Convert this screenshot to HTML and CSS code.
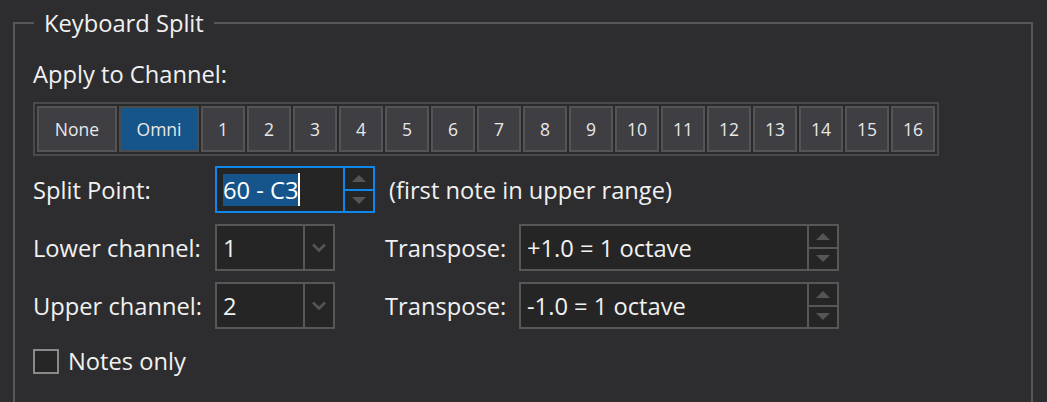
FILE: index.html
```html
<!DOCTYPE html>
<html>
<head>
<meta charset="utf-8">
<title>Keyboard Split</title>
<link rel="stylesheet" href="styles.css">
</head>
<body>
<fieldset class="group">
  <legend class="group-title">Keyboard Split</legend>

  <div class="line">Apply to Channel:</div>

  <div class="channel-strip">
    <button class="ch ch-wide">None</button>
    <button class="ch ch-wide ch-active">Omni</button>
    <button class="ch">1</button>
    <button class="ch">2</button>
    <button class="ch">3</button>
    <button class="ch">4</button>
    <button class="ch">5</button>
    <button class="ch">6</button>
    <button class="ch">7</button>
    <button class="ch">8</button>
    <button class="ch">9</button>
    <button class="ch">10</button>
    <button class="ch">11</button>
    <button class="ch">12</button>
    <button class="ch">13</button>
    <button class="ch">14</button>
    <button class="ch">15</button>
    <button class="ch">16</button>
  </div>

  <div class="row row-first">
    <span class="label label-main">Split Point:</span>
    <div class="spin spin-split spin-focus">
      <div class="field-text"><span class="sel">60 - C3</span><span class="caret"></span></div>
      <div class="spin-btns">
        <span class="spin-btn"><svg class="arrow" viewBox="0 0 14 7" width="14" height="7"><polygon points="0,7 7,0 14,7"/></svg></span>
        <span class="spin-btn"><svg class="arrow" viewBox="0 0 14 7" width="14" height="7"><polygon points="0,0 14,0 7,7"/></svg></span>
      </div>
    </div>
    <span class="hint">(first note in upper range)</span>
  </div>

  <div class="row">
    <span class="label label-main">Lower channel:</span>
    <div class="combo">
      <div class="field-text">1</div>
      <div class="combo-btn"><svg class="chev" viewBox="0 0 14 9" width="14" height="9"><polyline points="1,1.5 7,7.5 13,1.5"/></svg></div>
    </div>
    <span class="label label-side">Transpose:</span>
    <div class="spin spin-wide">
      <div class="field-text">+1.0 = 1 octave</div>
      <div class="spin-btns">
        <span class="spin-btn"><svg class="arrow" viewBox="0 0 14 7" width="14" height="7"><polygon points="0,7 7,0 14,7"/></svg></span>
        <span class="spin-btn"><svg class="arrow" viewBox="0 0 14 7" width="14" height="7"><polygon points="0,0 14,0 7,7"/></svg></span>
      </div>
    </div>
  </div>

  <div class="row">
    <span class="label label-main">Upper channel:</span>
    <div class="combo">
      <div class="field-text">2</div>
      <div class="combo-btn"><svg class="chev" viewBox="0 0 14 9" width="14" height="9"><polyline points="1,1.5 7,7.5 13,1.5"/></svg></div>
    </div>
    <span class="label label-side">Transpose:</span>
    <div class="spin spin-wide">
      <div class="field-text">-1.0 = 1 octave</div>
      <div class="spin-btns">
        <span class="spin-btn"><svg class="arrow" viewBox="0 0 14 7" width="14" height="7"><polygon points="0,7 7,0 14,7"/></svg></span>
        <span class="spin-btn"><svg class="arrow" viewBox="0 0 14 7" width="14" height="7"><polygon points="0,0 14,0 7,7"/></svg></span>
      </div>
    </div>
  </div>

  <label class="check-row">
    <span class="checkbox"></span>
    <span class="check-text">Notes only</span>
  </label>
</fieldset>
</body>
</html>
```
FILE: styles.css
```css
html, body {
  margin: 0;
  padding: 0;
  height: 402px;
  overflow: hidden;
  background: #2d2d30;
}

body {
  font-family: "Open Sans", "Noto Sans", sans-serif;
  font-size: 23.7px;
  line-height: 32px;
  color: #f1f1f1;
}

.group {
  margin: 7px 14px 0 13px;
  padding: 19px 18px 60px 18px;
  border: 2px solid #575757;
  min-width: 0;
}

.group-title {
  padding: 0 10px;
  margin-left: 1px;
  line-height: 32px;
  color: #f1f1f1;
}

.line {
  height: 32px;
}

.channel-strip {
  margin-top: 12px;
  display: flex;
  gap: 2px;
  width: max-content;
  padding: 2px;
  border: 2px solid #4a4a4c;
  background: #2a2a2c;
}

.ch {
  box-sizing: border-box;
  width: 44px;
  height: 46px;
  padding: 0;
  margin: 0;
  border: 2px solid #545457;
  background: #3e3e43;
  color: #e8e8e8;
  font-family: "Open Sans", "Noto Sans", sans-serif;
  font-size: 17.5px;
  line-height: 24px;
  text-align: center;
}

.ch-wide {
  width: 80px;
}

.ch-active {
  background: #155589;
  border-color: #4a4c50;
}

.row {
  display: flex;
  align-items: center;
  margin-top: 11px;
  height: 47px;
}

.row-first {
  margin-top: 10px;
}

.label-main {
  width: 182px;
  flex: none;
}

.label-side {
  width: 134px;
  flex: none;
  margin-left: 50px;
}

.spin,
.combo {
  box-sizing: border-box;
  height: 47px;
  display: flex;
  border: 2px solid #575757;
  background: #252526;
  flex: none;
}

.spin-split {
  width: 160px;
}

.spin-focus {
  border-color: #0e87ec;
}

.spin-wide {
  width: 320px;
}

.combo {
  width: 120px;
}

.field-text {
  flex: 1;
  display: flex;
  align-items: center;
  padding-left: 6px;
  white-space: nowrap;
  overflow: hidden;
}

.sel {
  background: #16558b;
  color: #ffffff;
  line-height: 32px;
}

.caret {
  display: inline-block;
  width: 2px;
  height: 33px;
  background: #ffffff;
}

.spin-btns {
  width: 28px;
  display: flex;
  flex-direction: column;
  border-left: 2px solid #575757;
}

.spin-focus .spin-btns {
  border-left-color: #0e87ec;
}

.spin-btn {
  flex: 1;
  display: flex;
  align-items: center;
  justify-content: center;
}

.spin-btn + .spin-btn {
  border-top: 2px solid #575757;
}

.spin-focus .spin-btn + .spin-btn {
  border-top-color: #0e87ec;
}

.arrow {
  fill: #555558;
}

.combo-btn {
  width: 28px;
  display: flex;
  align-items: center;
  justify-content: center;
  border-left: 2px solid #575757;
}

.chev {
  fill: none;
  stroke: #555558;
  stroke-width: 2.6;
}

.hint {
  margin-left: 14px;
}

.check-row {
  display: flex;
  align-items: center;
  margin-top: 16px;
  height: 32px;
}

.checkbox {
  box-sizing: border-box;
  width: 26px;
  height: 25px;
  border: 2px solid #8a8a8a;
  background: #262626;
  flex: none;
}

.check-text {
  margin-left: 9px;
}
```
